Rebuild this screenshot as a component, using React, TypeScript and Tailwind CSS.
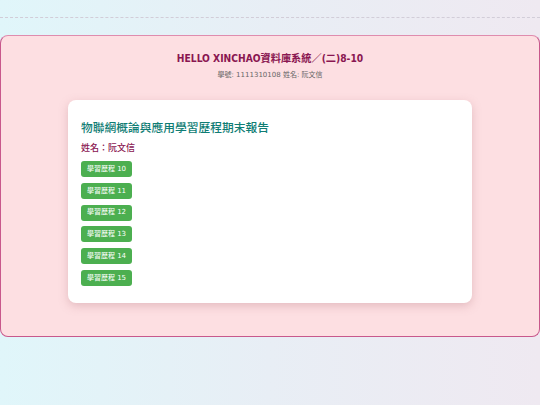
import React from 'react';

const font = { fontFamily: '"DejaVu Sans", Verdana, "Noto Sans CJK TC", sans-serif' };
const titleFont = { fontFamily: '"DejaVu Sans Condensed", "DejaVu Sans", "Noto Sans CJK TC", sans-serif' };

const records = [10, 11, 12, 13, 14, 15];

export default function App() {
  return (
    <div
      className="min-h-screen w-full bg-gradient-to-r from-[#e0f6fa] via-[#e8eef5] to-[#efe9f1] pt-[17px]"
      style={font}
    >
      {/* divider */}
      <div className="border-t border-dashed border-[#d2cdd8]" />

      {/* main box */}
      <div className="mt-[17px] h-[302px] rounded-[8px] border border-[#c8588c] border-t-[#df8cae] bg-[#fddfe2] px-[67px] pt-[16px]">
        <h1 className="text-center text-[10.2px] font-bold leading-[14px] text-[#8a1651]" style={titleFont}>
          HELLO XINCHAO資料庫系統／(二)8-10
        </h1>
        <p className="mt-[4px] text-center text-[7px] leading-[10px] text-[#666]">
          學號: 1111310108 姓名: 阮文信
        </p>

        {/* card */}
        <div className="mt-[20px] h-[203px] rounded-[8px] bg-white px-[13px] pt-[20px] shadow-[0_3px_10px_rgba(180,120,130,0.35)]">
          <h2 className="text-[11.75px] font-medium leading-[16px] text-[#0f7d74]">
            物聯網概論與應用學習歷程期末報告
          </h2>
          <p className="mt-[6px] text-[9px] font-medium leading-[12px] text-[#8a1651]">姓名：阮文信</p>
          <div className="mt-[7px] flex flex-col items-start gap-[5.8px]">
            {records.map((n) => (
              <button
                key={n}
                className="flex h-[16px] w-[51px] items-center justify-center rounded-[3px] bg-[#4caf50] text-[7px] text-white"
              >
                學習歷程 {n}
              </button>
            ))}
          </div>
        </div>
      </div>
    </div>
  );
}
